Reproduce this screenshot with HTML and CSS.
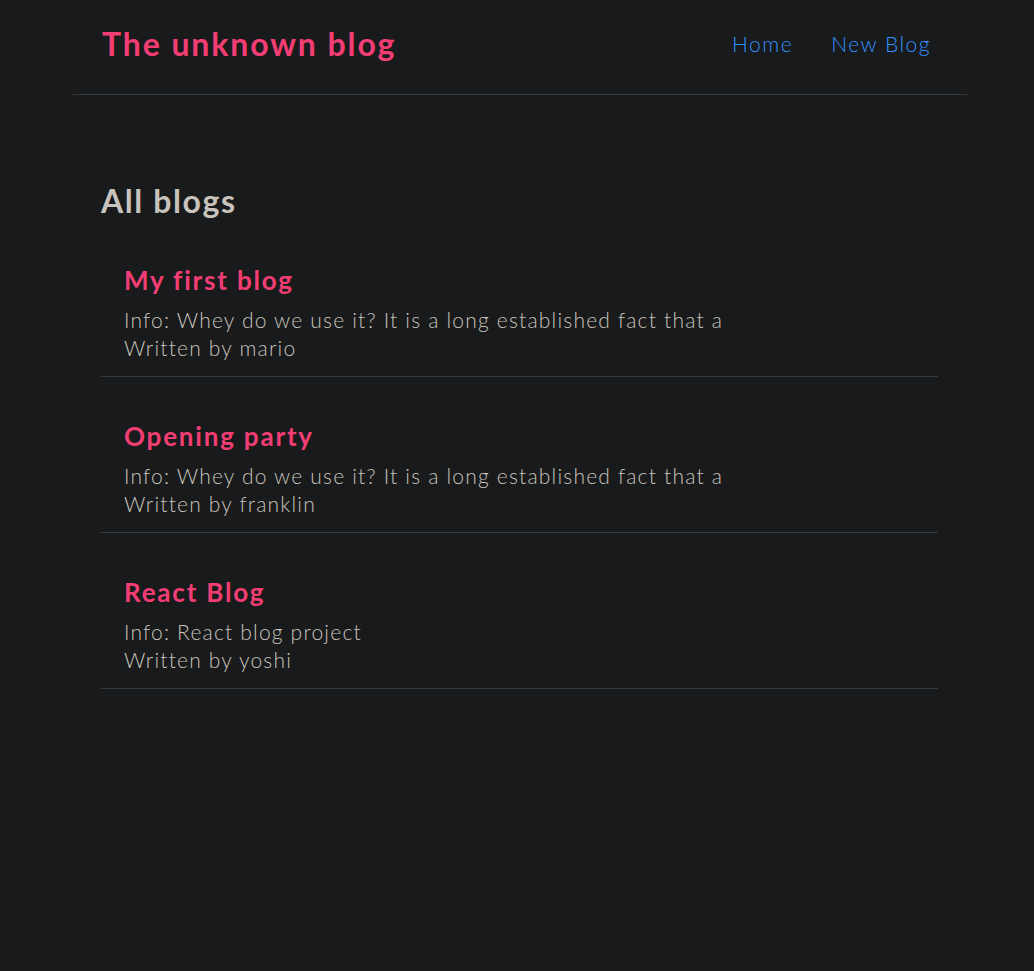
FILE: index.html
```html
<!DOCTYPE html>
<html lang="en">
<head>
<meta charset="utf-8">
<title>The unknown blog</title>
<link rel="stylesheet" href="styles.css">
</head>
<body>
<div class="app">
  <nav class="navbar">
    <h1 class="brand">The unknown blog</h1>
    <div class="links">
      <a href="#" class="link">Home</a>
      <a href="#" class="link">New Blog</a>
    </div>
  </nav>
  <main class="content">
    <h2 class="page-title">All blogs</h2>
    <div class="blog-list">
      <div class="blog-preview">
        <h2 class="blog-title">My first blog</h2>
        <p class="blog-text">Info: Whey do we use it? It is a long established fact that a</p>
        <p class="blog-text">Written by mario</p>
      </div>
      <div class="blog-preview">
        <h2 class="blog-title">Opening party</h2>
        <p class="blog-text">Info: Whey do we use it? It is a long established fact that a</p>
        <p class="blog-text">Written by franklin</p>
      </div>
      <div class="blog-preview">
        <h2 class="blog-title">React Blog</h2>
        <p class="blog-text">Info: React blog project</p>
        <p class="blog-text">Written by yoshi</p>
      </div>
    </div>
  </main>
</div>
</body>
</html>
```
FILE: styles.css
```css
html, body {
  margin: 0;
  padding: 0;
  background: #181a1b;
}
body {
  font-family: Lato, "Noto Sans", sans-serif;
  font-variant-ligatures: none;
  color: #c8c3bc;
  min-height: 971px;
}
.app {
  margin: 0 67px 0 73px;
}
.navbar {
  display: flex;
  align-items: center;
  justify-content: space-between;
  height: 40px;
  padding: 24px 29px 30px 29px;
  border-bottom: 1px solid #35393b;
}
.brand {
  margin: 0;
  font-size: 32px;
  line-height: 40px;
  font-weight: 700;
  letter-spacing: 1.9px;
  color: #f23e74;
}
.links {
  display: flex;
  gap: 38px;
  padding-right: 7px;
}
.link {
  font-size: 21px;
  line-height: 28px;
  font-weight: 300;
  letter-spacing: 1.5px;
  color: #3391ff;
  text-decoration: none;
}
.content {
  padding: 0 29px 0 28px;
  margin-top: 86px;
}
.page-title {
  margin: 0;
  font-size: 32px;
  line-height: 40px;
  font-weight: 700;
  letter-spacing: 1.6px;
  color: #c8c3bc;
}
.blog-list {
  display: flex;
  flex-direction: column;
  gap: 20px;
  margin-top: 20px;
}
.blog-preview {
  padding: 23px 23px 14px;
  border-bottom: 1px solid #35393b;
}
.blog-title {
  margin: 0 0 10px;
  font-size: 26px;
  line-height: 32px;
  font-weight: 700;
  letter-spacing: 1.8px;
  color: #f23e74;
}
.blog-text {
  margin: 0;
  font-size: 21px;
  line-height: 28px;
  font-weight: 300;
  letter-spacing: 1.2px;
  color: #c8c3bc;
}
```
